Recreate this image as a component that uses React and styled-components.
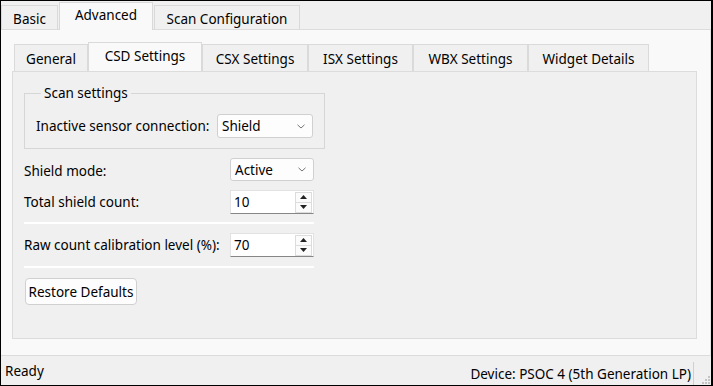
import React from "react";
import styled, { createGlobalStyle } from "styled-components";

const Global = createGlobalStyle`
  html, body { margin: 0; padding: 0; background: #fff; }
  body { font-family: "Noto Sans", "Segoe UI", sans-serif; }
  * { box-sizing: border-box; }
`;

const Window = styled.div`
  width: 713px;
  height: 386px;
  border: 1px solid #000;
  border-right-width: 2px;
  background: #f0f0f0;
  display: flex;
  flex-direction: column;
  color: #000;
  font-size: 13.5px;
  overflow: hidden;
`;

const OuterTabBar = styled.div`
  height: 28px;
  display: flex;
  align-items: flex-end;
  background: #f0f0f0;
  position: relative;
  z-index: 1;
`;

const OuterTab = styled.div`
  width: ${(p) => p.$w}px;
  height: ${(p) => (p.$active ? 28 : 24)}px;
  margin-bottom: ${(p) => (p.$active ? -1 : 0)}px;
  margin-right: 1px;
  background: ${(p) => (p.$active ? "#f9f9f9" : "#f0f0f0")};
  border: 1px solid #d9d9d9;
  border-bottom: none;
  display: flex;
  align-items: center;
  justify-content: center;
  font-size: 13.5px;
  padding-top: ${(p) => (p.$active ? 0 : 2)}px;
  padding-bottom: ${(p) => (p.$active ? 3 : 0)}px;
`;

const Page = styled.div`
  flex: 1;
  background: #f9f9f9;
  border-top: 1px solid #dcdcdc;
  border-bottom: 1px solid #dcdcdc;
  border-right: 1px solid #e4e4e4;
  padding: 12px 13px 16px 11px;
  display: flex;
  flex-direction: column;
`;

const InnerTabBar = styled.div`
  height: 29px;
  display: flex;
  align-items: flex-end;
  padding-left: 2px;
  position: relative;
  z-index: 1;
`;

const InnerTab = styled.div`
  width: ${(p) => p.$w}px;
  height: ${(p) => (p.$active ? 29 : 27)}px;
  background: ${(p) => (p.$active ? "#f9f9f9" : "#f0f0f0")};
  border: 1px solid #dadada;
  border-bottom: none;
  display: flex;
  align-items: center;
  justify-content: center;
  padding-top: ${(p) => (p.$active ? 0 : 2)}px;
  padding-bottom: ${(p) => (p.$active ? 2 : 0)}px;
`;

const Panel = styled.div`
  flex: 1;
  background: #f0f0f0;
  border: 1px solid #dcdcdc;
  padding: 12px 11px 0 11px;
  display: flex;
  flex-direction: column;
  align-items: flex-start;
`;

const Group = styled.fieldset`
  margin: 0;
  width: 301px;
  border: 1px solid #d6d6d6;
  padding: 11px 11px 10px 11px;
  min-width: 0;
`;

const Legend = styled.legend`
  padding: 0 3px;
  margin-left: 5px;
  line-height: 19px;
`;

const Row = styled.div`
  display: flex;
  align-items: center;
  justify-content: space-between;
  width: ${(p) => p.$w || 290}px;
  margin-top: ${(p) => p.$mt || 0}px;
`;

const Label = styled.span`
  line-height: 18px;
  padding-top: ${(p) => p.$pt || 0}px;
`;

const Combo = styled.div`
  width: ${(p) => p.$w}px;
  height: ${(p) => p.$h || 24}px;
  background: #fdfdfd;
  border: 1px solid #d0d0d0;
  border-radius: 3px;
  display: flex;
  align-items: center;
  justify-content: space-between;
  padding: 0 7px 0 4px;
`;

const Spin = styled.div`
  width: 84px;
  height: 24px;
  background: #fff;
  border: 1px solid #e2e2e2;
  border-bottom: 1px solid #868686;
  display: flex;
  align-items: center;
  justify-content: space-between;
  padding: 0 1px 0 3px;
`;

const SpinButtons = styled.div`
  display: flex;
  flex-direction: column;
`;

const SpinBtn = styled.div`
  width: 17px;
  height: 11px;
  border: 1px solid #dcdcdc;
  background: #fbfbfb;
  display: flex;
  align-items: center;
  justify-content: center;
  margin-top: ${(p) => (p.$down ? -1 : 0)}px;
`;

const Separator = styled.div`
  width: 290px;
  height: 2px;
  background: #fff;
  margin-top: ${(p) => p.$mt}px;
`;

const Button = styled.button`
  margin-top: 10px;
  width: 112px;
  height: 27px;
  background: #fdfdfd;
  border: 1px solid #d0d0d0;
  border-radius: 4px;
  font: inherit;
  color: #000;
  padding: 0;
  margin-left: 1px;
`;

const StatusBar = styled.div`
  height: 29px;
  display: flex;
  align-items: center;
  justify-content: space-between;
  padding-left: 4px;
  font-size: 13.5px;
  position: relative;
`;

const StatusRight = styled.div`
  display: flex;
  align-items: center;
  height: 100%;
`;

const StatusSection = styled.span`
  padding-right: 2px;
  margin-right: 17px;
  border-right: 1px solid #cfcfcf;
  height: 23px;
  display: flex;
  align-items: center;
  align-self: flex-end;
  padding-top: 1px;
`;

const Grip = styled.svg`
  position: absolute;
  right: 0;
  bottom: 0;
`;

const Chevron = () => (
  <svg width="8" height="5" viewBox="0 0 8 5">
    <path d="M0.5 0.8 L4 4 L7.5 0.8" fill="none" stroke="#666" strokeWidth="0.9" />
  </svg>
);

const Tri = ({ down }) => (
  <svg width="7" height="4" viewBox="0 0 7 4">
    {down ? <path d="M0 0 H7 L3.5 4 Z" fill="#222" /> : <path d="M0 4 H7 L3.5 0 Z" fill="#222" />}
  </svg>
);

const SpinBox = ({ value }) => (
  <Spin>
    <span>{value}</span>
    <SpinButtons>
      <SpinBtn>
        <Tri />
      </SpinBtn>
      <SpinBtn $down>
        <Tri down />
      </SpinBtn>
    </SpinButtons>
  </Spin>
);

export default function App() {
  return (
    <>
      <Global />
      <Window>
        <OuterTabBar>
          <OuterTab $w={57}>Basic</OuterTab>
          <OuterTab $w={94} $active>Advanced</OuterTab>
          <OuterTab $w={146}>Scan Configuration</OuterTab>
        </OuterTabBar>
        <Page>
          <InnerTabBar>
            <InnerTab $w={74}>General</InnerTab>
            <InnerTab $w={114} $active>CSD Settings</InnerTab>
            <InnerTab $w={106}>CSX Settings</InnerTab>
            <InnerTab $w={105}>ISX Settings</InnerTab>
            <InnerTab $w={115}>WBX Settings</InnerTab>
            <InnerTab $w={121}>Widget Details</InnerTab>
          </InnerTabBar>
          <Panel>
            <Group>
              <Legend>Scan settings</Legend>
              <Row $w={277}>
                <Label>Inactive sensor connection:</Label>
                <Combo $w={96}>
                  <span>Shield</span>
                  <Chevron />
                </Combo>
              </Row>
            </Group>
            <Row $mt={9}>
              <Label $pt={2}>Shield mode:</Label>
              <Combo $w={84} $h={23}>
                <span>Active</span>
                <Chevron />
              </Combo>
            </Row>
            <Row $mt={9}>
              <Label>Total shield count:</Label>
              <SpinBox value="10" />
            </Row>
            <Separator $mt={8} />
            <Row $mt={9}>
              <Label>Raw count calibration level (%):</Label>
              <SpinBox value="70" />
            </Row>
            <Separator $mt={9} />
            <Button>Restore Defaults</Button>
          </Panel>
        </Page>
        <StatusBar>
          <span>Ready</span>
          <StatusRight>
            <StatusSection>Device: PSOC 4 (5th Generation LP)</StatusSection>
          </StatusRight>
          <Grip width="10" height="10" viewBox="0 0 10 10">
            {[
              [7, 1],
              [4, 4],
              [7, 4],
              [1, 7],
              [4, 7],
              [7, 7],
            ].map(([x, y]) => (
              <rect key={`${x}-${y}`} x={x} y={y} width="2" height="2" fill="#c4c4c4" />
            ))}
          </Grip>
        </StatusBar>
      </Window>
    </>
  );
}
